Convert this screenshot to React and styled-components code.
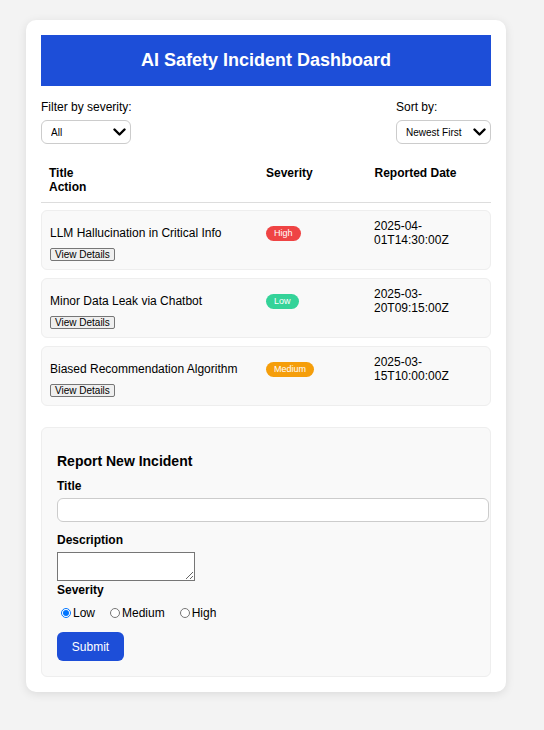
import React, { useState } from "react";
import styled, { createGlobalStyle } from "styled-components";

const GlobalStyle = createGlobalStyle`
  body {
    margin: 0;
    background: #f3f3f3;
    font-family: "Liberation Sans", Arial, sans-serif;
    color: #000;
  }
`;

const Page = styled.div`
  padding: 20px 26px;
`;

const Card = styled.div`
  width: 480px;
  box-sizing: border-box;
  background: #fff;
  border-radius: 10px;
  padding: 15px;
  box-shadow: 0 2px 10px rgba(0, 0, 0, 0.1);
`;

const Header = styled.h1`
  margin: 0;
  background: #1d4ed8;
  color: #fff;
  font-size: 18px;
  font-weight: bold;
  text-align: center;
  padding: 15px 0;
  line-height: 21px;
`;

const Controls = styled.div`
  display: flex;
  justify-content: space-between;
  margin: 14px 0;
`;

const ControlGroup = styled.div`
  display: flex;
  flex-direction: column;
  align-items: flex-start;
`;

const ControlLabel = styled.label`
  font-size: 12px;
  line-height: 14px;
  margin-bottom: 6px;
`;

const SelectWrap = styled.div`
  position: relative;
  width: ${(p) => p.$width}px;
  height: 24px;
`;

const Select = styled.select`
  appearance: none;
  -webkit-appearance: none;
  box-sizing: border-box;
  font-family: "Liberation Sans", Arial, sans-serif;
  font-size: 10px;
  color: #000;
  height: 24px;
  width: 100%;
  padding: 0 20px 0 9px;
  border: 1px solid #ccc;
  border-radius: 6px;
  background: #fff;
  outline: none;
`;

const Chevron = styled.svg`
  position: absolute;
  right: 5px;
  top: 8px;
  width: 13px;
  height: 8px;
  pointer-events: none;
`;

const Grid = styled.div`
  display: grid;
  grid-template-columns: 2fr 1fr 1fr;
  align-items: center;
  padding: 8px;
  font-size: 12px;
  line-height: 14px;
`;

const HeadRow = styled(Grid)`
  font-weight: bold;
  border-bottom: 1px solid #ddd;
  align-items: start;
`;

const Row = styled(Grid)`
  background: #f9f9f9;
  border: 1px solid #eee;
  border-radius: 6px;
  margin-top: 7px;

  & + & {
    margin-top: 8px;
  }
`;

const Badge = styled.span`
  justify-self: start;
  display: inline-block;
  padding: 0 8px;
  height: 15px;
  line-height: 15px;
  border-radius: 8px;
  color: #fff;
  font-size: 9px;
  background: ${(p) => p.$color};
`;

const SmallButton = styled.button`
  justify-self: start;
  font-family: "Liberation Sans", Arial, sans-serif;
  font-size: 10px;
  line-height: 11px;
  padding: 0 4px;
  margin-top: 1px;
  background: #efefef;
  border: 1px solid #767676;
  border-radius: 2px;
  color: #000;
`;

const FormBox = styled.form`
  margin-top: 21px;
  background: #f9f9f9;
  border: 1px solid #eee;
  border-radius: 6px;
  padding: 15px;
`;

const FormTitle = styled.h3`
  margin: 10px 0 10px;
  font-size: 14px;
  line-height: 16px;
`;

const FieldLabel = styled.label`
  display: block;
  font-size: 12px;
  line-height: 14px;
  font-weight: bold;
  margin-bottom: 5px;
`;

const TextInput = styled.input`
  display: block;
  width: 100%;
  height: 22px;
  padding: 0 6px;
  border: 1px solid #ccc;
  border-radius: 6px;
  margin: 0 0 11px;
  background: #fff;
`;

const TextArea = styled.textarea`
  display: block;
  box-sizing: border-box;
  width: 138px;
  height: 29px;
  border: 1px solid #767676;
  margin: 0 0 2px;
`;

const RadioRow = styled.div`
  display: flex;
  align-items: center;
  margin: 9px 0 12px;
  font-size: 12px;
  line-height: 14px;
`;

const RadioLabel = styled.label`
  display: flex;
  align-items: center;
  margin-right: 11px;
`;

const Radio = styled.input`
  width: 10px;
  height: 10px;
  margin: 0 2px 0 4px;
`;

const SubmitButton = styled.button`
  font-family: "Liberation Sans", Arial, sans-serif;
  font-size: 12px;
  color: #fff;
  background: #1d4ed8;
  border: none;
  border-radius: 6px;
  width: 67px;
  height: 29px;
`;

const incidents = [
  { title: "LLM Hallucination in Critical Info", severity: "High", date: "2025-04-01T14:30:00Z" },
  { title: "Minor Data Leak via Chatbot", severity: "Low", date: "2025-03-20T09:15:00Z" },
  { title: "Biased Recommendation Algorithm", severity: "Medium", date: "2025-03-15T10:00:00Z" },
];

const severityColors = { High: "#ef4444", Low: "#34d399", Medium: "#f59e0b" };

const splitDate = (d) => d.slice(0, 8) + "\u200B" + d.slice(8);

const Dropdown = ({ width, options }) => (
  <SelectWrap $width={width}>
    <Select defaultValue={options[0]}>
      {options.map((o) => (
        <option key={o}>{o}</option>
      ))}
    </Select>
    <Chevron viewBox="0 0 13 8">
      <path d="M1.5 1.5 L6.5 6.5 L11.5 1.5" fill="none" stroke="#000" strokeWidth="2.4" strokeLinecap="round" strokeLinejoin="round" />
    </Chevron>
  </SelectWrap>
);

export default function App() {
  const [severity, setSeverity] = useState("Low");

  return (
    <>
      <GlobalStyle />
      <Page>
        <Card>
          <Header>AI Safety Incident Dashboard</Header>

          <Controls>
            <ControlGroup>
              <ControlLabel>Filter by severity:</ControlLabel>
              <Dropdown width={90} options={["All", "Low", "Medium", "High"]} />
            </ControlGroup>
            <ControlGroup>
              <ControlLabel>Sort by:</ControlLabel>
              <Dropdown width={95} options={["Newest First", "Oldest First"]} />
            </ControlGroup>
          </Controls>

          <HeadRow>
            <div>Title</div>
            <div>Severity</div>
            <div>Reported Date</div>
            <div>Action</div>
          </HeadRow>

          {incidents.map((inc) => (
            <Row key={inc.title}>
              <div>{inc.title}</div>
              <Badge $color={severityColors[inc.severity]}>{inc.severity}</Badge>
              <div>{splitDate(inc.date)}</div>
              <SmallButton type="button">View Details</SmallButton>
            </Row>
          ))}

          <FormBox onSubmit={(e) => e.preventDefault()}>
            <FormTitle>Report New Incident</FormTitle>
            <FieldLabel>Title</FieldLabel>
            <TextInput type="text" />
            <FieldLabel>Description</FieldLabel>
            <TextArea />
            <FieldLabel>Severity</FieldLabel>
            <RadioRow>
              {["Low", "Medium", "High"].map((s) => (
                <RadioLabel key={s}>
                  <Radio
                    type="radio"
                    name="severity"
                    checked={severity === s}
                    onChange={() => setSeverity(s)}
                  />
                  {s}
                </RadioLabel>
              ))}
            </RadioRow>
            <SubmitButton type="submit">Submit</SubmitButton>
          </FormBox>
        </Card>
      </Page>
    </>
  );
}
